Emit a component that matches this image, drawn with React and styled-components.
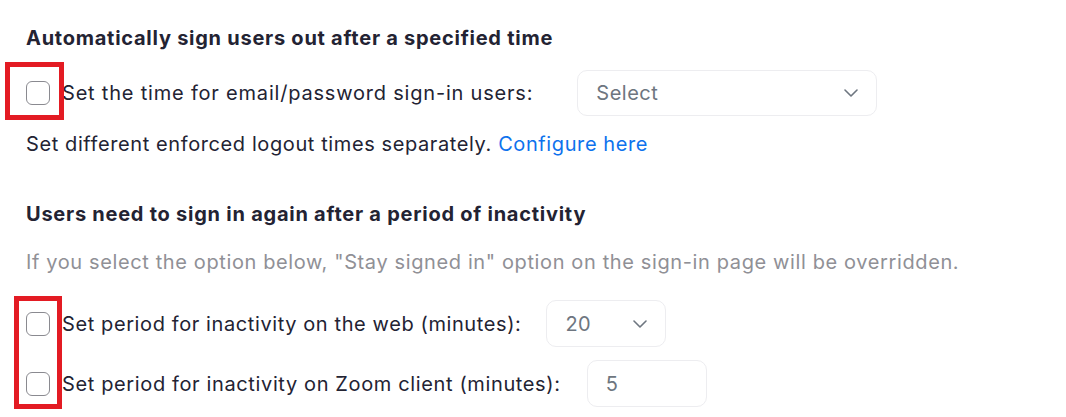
import React from "react";
import styled, { createGlobalStyle } from "styled-components";

const GlobalStyle = createGlobalStyle`
  html, body {
    margin: 0;
    padding: 0;
    background: #fff;
  }
  body {
    font-family: Inter, "Noto Sans", Arial, sans-serif;
    color: #232333;
  }
`;

const Page = styled.div`
  display: flex;
  flex-direction: column;
  padding: 24px 0 0 26px;
  width: 1066px;
  height: 417px;
  box-sizing: border-box;
  overflow: hidden;
`;

const Heading = styled.h3`
  margin: ${(p) => p.$mt || 0}px 0 0;
  font-size: 20px;
  line-height: 28px;
  font-weight: 700;
  color: #232333;
  letter-spacing: ${(p) => p.$ls || 0}px;
  white-space: nowrap;
`;

const Text = styled.p`
  margin: ${(p) => p.$mt || 0}px 0 0;
  font-size: 20px;
  line-height: 28px;
  color: ${(p) => (p.$muted ? "#909096" : "#232333")};
  letter-spacing: ${(p) => p.$ls || 0}px;
  white-space: nowrap;
`;

const Link = styled.a`
  color: #0e72ed;
  text-decoration: none;
  cursor: pointer;
`;

const Group = styled.div`
  position: relative;
  display: flex;
  flex-direction: column;
  gap: ${(p) => p.$gap || 0}px;
  margin-top: ${(p) => p.$mt || 0}px;
`;

const Row = styled.div`
  display: flex;
  align-items: center;
  height: ${(p) => p.$h || 47}px;
`;

const Check = styled.span`
  flex: none;
  width: 22px;
  height: 22px;
  border: 1px solid #8a8a90;
  border-radius: 6px;
  background: #fff;
`;

const Label = styled.span`
  margin-left: 12px;
  font-size: 20px;
  color: #232333;
  letter-spacing: ${(p) => p.$ls || 0}px;
  white-space: nowrap;
`;

const Field = styled.div`
  display: flex;
  align-items: center;
  justify-content: space-between;
  box-sizing: border-box;
  flex: none;
  width: ${(p) => p.$w}px;
  height: ${(p) => p.$h || 47}px;
  margin-left: ${(p) => p.$ml}px;
  padding: 0 18px;
  border: 1px solid #ededf0;
  border-radius: 10px;
  font-size: 20px;
  letter-spacing: 0.5px;
  color: #6e7680;
`;

const Mark = styled.span`
  position: absolute;
  border: 5px solid #e31b23;
  box-sizing: border-box;
  pointer-events: none;
`;

const Chevron = () => (
  <svg width="14" height="8" viewBox="0 0 14 8" fill="none">
    <path d="M1 1l6 6 6-6" stroke="#6e7680" strokeWidth="1.6" strokeLinecap="round" strokeLinejoin="round" />
  </svg>
);

export default function App() {
  return (
    <>
      <GlobalStyle />
      <Page>
        <Heading $ls={0.74}>Automatically sign users out after a specified time</Heading>
        <Group $mt={18}>
          <Mark style={{ left: -21, top: -8, width: 59, height: 58 }} />
          <Row $h={46}>
            <Check />
            <Label $ls={0.8}>Set the time for email/password sign-in users:</Label>
            <Field $w={300} $h={46} $ml={44}>
              <span>Select</span>
              <Chevron />
            </Field>
          </Row>
        </Group>
        <Text $mt={14} $ls={0.6}>
          Set different enforced logout times separately. <Link>Configure here</Link>
        </Text>

        <Heading $mt={42} $ls={0.75}>Users need to sign in again after a period of inactivity</Heading>
        <Text $mt={20} $muted $ls={0.62}>
          If you select the option below, "Stay signed in" option on the sign-in page will be overridden.
        </Text>
        <Group $mt={24} $gap={13}>
          <Mark style={{ left: -12, top: -4, width: 48, height: 113 }} />
          <Row>
            <Check />
            <Label $ls={0.6}>Set period for inactivity on the web (minutes):</Label>
            <Field $w={120} $ml={25}>
              <span>20</span>
              <Chevron />
            </Field>
          </Row>
          <Row>
            <Check />
            <Label $ls={0.63}>Set period for inactivity on Zoom client (minutes):</Label>
            <Field $w={120} $ml={26}>
              <span>5</span>
            </Field>
          </Row>
        </Group>
      </Page>
    </>
  );
}
